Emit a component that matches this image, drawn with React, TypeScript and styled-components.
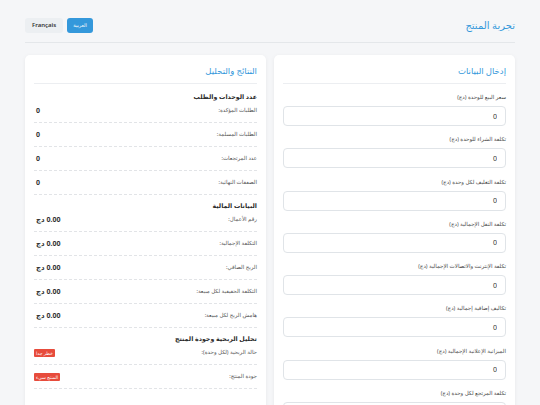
import React from "react";
import styled, { createGlobalStyle } from "styled-components";

const Global = createGlobalStyle`
  html, body { margin: 0; padding: 0; background: #f5f6f8; }
  body { font-family: "Noto Sans", "DejaVu Sans", sans-serif; color: #333; }
  * { box-sizing: border-box; }
`;

const Page = styled.div`
  direction: rtl;
  padding: 16px 25px 20px;
`;

const Header = styled.header`
  display: flex;
  align-items: center;
  justify-content: space-between;
  padding-bottom: 8px;
  border-bottom: 1px solid #e4e7ea;
  margin-bottom: 12px;
  height: 27px;
`;

const Title = styled.h1`
  margin: 0;
  font-size: 10px;
  line-height: 18px;
  font-weight: 400;
  color: #3498db;
`;

const LangGroup = styled.div`
  display: flex;
  gap: 4px;
`;

const LangButton = styled.button<{ $active?: boolean }>`
  height: 15px;
  padding: 0 ${(p) => (p.$active ? "6px" : "7px")};
  border: none;
  border-radius: 3px;
  font-family: "Noto Sans", "DejaVu Sans", sans-serif;
  font-size: ${(p) => (p.$active ? "5px" : "6px")};
  font-weight: ${(p) => (p.$active ? 400 : 600)};
  background: ${(p) => (p.$active ? "#3498db" : "#eceff2")};
  color: ${(p) => (p.$active ? "#fff" : "#333")};
`;

const Columns = styled.div`
  display: grid;
  grid-template-columns: 1fr 1fr;
  gap: 8px;
`;

const Card = styled.section`
  background: #fff;
  border-radius: 5px;
  box-shadow: 0 1px 4px rgba(0, 0, 0, 0.06);
  padding: 10px 9px 12px;
`;

const CardTitle = styled.h2`
  margin: 0 0 8px;
  padding-bottom: 6px;
  border-bottom: 1px solid #eceef1;
  font-size: 8.5px;
  line-height: 12px;
  font-weight: 400;
  color: #3498db;
`;

const Field = styled.div`
  display: flex;
  flex-direction: column;
  margin-bottom: 8.3px;
`;

const Label = styled.label`
  font-size: 5.5px;
  line-height: 10px;
  color: #4a4a4a;
  margin-bottom: 4px;
`;

const Input = styled.input`
  height: 20px;
  border: 1px solid #e0e4e8;
  border-radius: 4px;
  padding: 0 8px;
  font-family: "Noto Sans", "DejaVu Sans", sans-serif;
  font-size: 7px;
  color: #333;
  text-align: right;
  background: #fff;
`;

const SectionHeading = styled.h3<{ $first?: boolean }>`
  margin: ${(p) => (p.$first ? "0" : "6px")} 0 -3px;
  font-size: 6.3px;
  line-height: 10px;
  font-weight: 700;
  color: #2b2b2b;
`;

const Row = styled.div`
  display: flex;
  justify-content: space-between;
  align-items: center;
  padding: 6px 0;
  border-bottom: 1px dashed #e2e4e7;
  min-height: 24px;
`;

const RowLabel = styled.span`
  font-size: 5.5px;
  line-height: 11px;
  color: #555;
`;

const Value = styled.span`
  font-size: 7px;
  line-height: 11px;
  font-weight: 700;
  color: #333;
  margin-left: 2px;
`;

const Badge = styled.span`
  display: inline-block;
  background: #e74c3c;
  color: #fff;
  font-size: 4.6px;
  line-height: 8px;
  padding: 0 2px;
  border-radius: 1px;
`;

const inputs = [
  "سعر البيع للوحدة (دج)",
  "تكلفة الشراء للوحدة (دج)",
  "تكلفة التغليف لكل وحدة (دج)",
  "تكلفة النقل الإجمالية (دج)",
  "تكلفة الإنترنت والاتصالات الإجمالية (دج)",
  "تكاليف إضافية إجمالية (دج)",
  "الميزانية الإعلانية الإجمالية (دج)",
  "تكلفة المرتجع لكل وحدة (دج)",
  "عدد الطلبات الإجمالي",
];

const units = [
  "الطلبات المؤكدة:",
  "الطلبات المسلمة:",
  "عدد المرتجعات:",
  "الصفقات النهائية:",
];

const finance = [
  "رقم الأعمال:",
  "التكلفة الإجمالية:",
  "الربح الصافي:",
  "التكلفة الحقيقية لكل مبيعة:",
  "هامش الربح لكل مبيعة:",
];

export default function App() {
  return (
    <Page>
      <Global />
      <Header>
        <Title>تجربة المنتج</Title>
        <LangGroup>
          <LangButton $active>العربية</LangButton>
          <LangButton>Français</LangButton>
        </LangGroup>
      </Header>
      <Columns>
        <Card>
          <CardTitle>إدخال البيانات</CardTitle>
          {inputs.map((l) => (
            <Field key={l}>
              <Label>{l}</Label>
              <Input defaultValue="0" />
            </Field>
          ))}
        </Card>
        <Card>
          <CardTitle>النتائج والتحليل</CardTitle>
          <SectionHeading $first>عدد الوحدات والطلب</SectionHeading>
          {units.map((l) => (
            <Row key={l}>
              <RowLabel>{l}</RowLabel>
              <Value>0</Value>
            </Row>
          ))}
          <SectionHeading>البيانات المالية</SectionHeading>
          {finance.map((l) => (
            <Row key={l}>
              <RowLabel>{l}</RowLabel>
              <Value>0.00 دج</Value>
            </Row>
          ))}
          <SectionHeading>تحليل الربحية وجودة المنتج</SectionHeading>
          <Row>
            <RowLabel>حالة الربحية (لكل وحدة):</RowLabel>
            <Badge>خطر جدا</Badge>
          </Row>
          <Row>
            <RowLabel>جودة المنتج:</RowLabel>
            <Badge>المنتج سيء</Badge>
          </Row>
        </Card>
      </Columns>
    </Page>
  );
}
